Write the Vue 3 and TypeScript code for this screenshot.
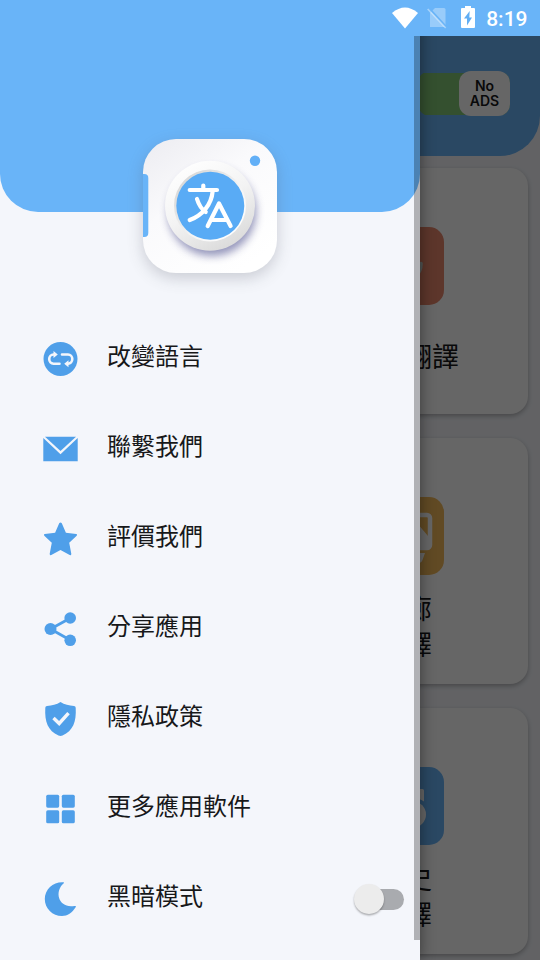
<script setup lang="ts">
import { ref } from 'vue'

type IconName = 'language' | 'mail' | 'star' | 'share' | 'privacy' | 'apps' | 'moon'

interface MenuItem {
  icon: IconName
  label: string
}

interface Feature {
  kind: 'voice' | 'gallery' | 'history'
  lines: string[]
}

const menu: MenuItem[] = [
  { icon: 'language', label: '改變語言' },
  { icon: 'mail', label: '聯繫我們' },
  { icon: 'star', label: '評價我們' },
  { icon: 'share', label: '分享應用' },
  { icon: 'privacy', label: '隱私政策' },
  { icon: 'apps', label: '更多應用軟件' },
  { icon: 'moon', label: '黑暗模式' },
]

const features: Feature[] = [
  { kind: 'voice', lines: ['語音翻譯'] },
  { kind: 'gallery', lines: ['畫廊', '翻譯'] },
  { kind: 'history', lines: ['歷史', '翻譯'] },
]

const darkMode = ref(false)
</script>

<template>
  <div class="screen">
    <main class="home">
      <header class="home-header">
        <div class="ads-switch">
          <div class="ads-thumb">
            <span>No</span>
            <span>ADS</span>
          </div>
        </div>
      </header>
      <section class="features">
        <article v-for="f in features" :key="f.kind" class="card">
          <div class="tile" :class="f.kind">
            <svg v-if="f.kind === 'voice'" viewBox="0 0 78 78">
              <path d="M31 20a8 8 0 0 1 16 0v16a8 8 0 0 1-16 0z" fill="#fff" />
              <path d="M22 36.5c0 22 33 22 33 0" fill="none" stroke="#c9d6d3" stroke-width="3.6" stroke-linecap="round" />
              <path d="M39 54v9" stroke="#fff" stroke-width="4" />
            </svg>
            <svg v-else-if="f.kind === 'gallery'" viewBox="0 0 78 78">
              <rect x="26" y="18" width="38" height="33" rx="3" fill="none" stroke="#fff" stroke-width="4.5" />
              <path d="M28 49V38l10-10 8 7 5-9 11 13v10z" fill="#fff" />
              <path d="M12 56h47l-2.5 7q-1 3-4 3H12z" fill="#fff" />
            </svg>
            <svg v-else viewBox="0 0 78 78">
              <path d="M17 22h39.5q1.500 0 1.500 1.500V34.500q-6-4-12-4T34 40L17 38z" fill="#fff" />
              <circle cx="47" cy="47.5" r="13" fill="#fff" />
              <path d="M44 40v9h5" fill="none" stroke="#69b4f8" stroke-width="3" />
            </svg>
          </div>
          <div class="caption">
            <p v-for="line in f.lines" :key="line">{{ line }}</p>
          </div>
        </article>
      </section>
    </main>

    <div class="scrim"></div>

    <aside class="drawer">
      <div class="drawer-header">
        <svg class="logo" viewBox="0 0 160 165">
          <defs>
            <linearGradient id="body" x1="0" y1="0" x2=".7" y2="1">
              <stop offset="0" stop-color="#ececf1" />
              <stop offset=".45" stop-color="#fafafc" />
              <stop offset="1" stop-color="#fff" />
            </linearGradient>
            <linearGradient id="ring" x1=".2" y1="0" x2=".75" y2="1">
              <stop offset="0" stop-color="#fff" />
              <stop offset=".5" stop-color="#f3f3f3" />
              <stop offset="1" stop-color="#d9d9d9" />
            </linearGradient>
            <linearGradient id="rim" x1=".1" y1=".1" x2=".9" y2=".9">
              <stop offset="0" stop-color="#d6d6d6" />
              <stop offset=".6" stop-color="#f4f4f4" />
              <stop offset="1" stop-color="#fff" />
            </linearGradient>
            <filter id="soft" x="-30%" y="-30%" width="160%" height="160%">
              <feGaussianBlur stdDeviation="8" />
            </filter>
            <filter id="lens" x="-30%" y="-30%" width="160%" height="160%">
              <feGaussianBlur stdDeviation="4" />
            </filter>
            <clipPath id="shell"><rect x="13" y="14" width="134" height="134" rx="33" /></clipPath>
          </defs>
          <rect x="13" y="19" width="134" height="134" rx="33" fill="#555968" opacity=".27" filter="url(#soft)" />
          <rect x="13" y="14" width="134" height="134" rx="33" fill="url(#body)" />
          <g clip-path="url(#shell)">
            <rect x="5" y="49" width="13.3" height="63" rx="4" fill="#69b4f8" />
          </g>
          <circle cx="125" cy="35.7" r="5.2" fill="#63b0f7" />
          <circle cx="82" cy="87" r="44" fill="#3d3f83" opacity=".55" filter="url(#lens)" />
          <circle cx="80" cy="80.7" r="45" fill="url(#ring)" />
          <circle cx="80" cy="80.5" r="36" fill="url(#rim)" />
          <circle cx="80.3" cy="80.7" r="34" fill="#59abf5" />
          <g fill="none" stroke="#fff" stroke-width="4.2" stroke-linecap="round" stroke-linejoin="round">
            <path d="M59.7 65H87M73.3 60.5V65M82.7 66C81.5 80 72 90.5 59.7 95M67 74C69 80.500 72 84.500 75.700 87" />
            <path d="M77.700 101 89 78.500 100.600 101M82 95H97" />
          </g>
        </svg>
      </div>

      <nav class="menu">
        <div v-for="item in menu" :key="item.icon" class="menu-item">
          <svg class="icon" viewBox="0.5 0 36 36">
            <template v-if="item.icon === 'language'">
              <circle cx="18" cy="18" r="17" fill="#4f9fe9" />
              <g fill="none" stroke="#f4f6fb" stroke-width="2.6" stroke-linecap="round" stroke-linejoin="round">
                <path d="M17 22.700H11a4.300 4.600 0 0 1 0-9.200h1" />
                <path d="M19.500 13.500h6a4.300 4.600 0 0 1 0 9.200H24.500" />
              </g>
              <path d="M11 10 15.300 13.500 11 17zM26 19.200 21.700 22.700 26 26.200z" fill="#f4f6fb" />
            </template>
            <template v-else-if="item.icon === 'mail'">
              <path d="M.8 7v23.200h34.400V7L18 23.200z" fill="#4f9fe9" />
              <path d="M2.500 5.700h31L18 20z" fill="#4f9fe9" />
            </template>
            <path
              v-else-if="item.icon === 'star'"
              d="m19.300 2.300 4.100 9.500 10.300 1.200q1.600.4.500 1.700l-7.500 7 2.100 11q.1 2-1.600 1.200L18 29l-9.200 4.900q-1.700.8-1.600-1.200l2.100-11-7.500-7q-1.100-1.300.5-1.700l10.300-1.200 4.100-9.500q1.300-1.700 2.600 0z"
              fill="#4f9fe9"
            />
            <g v-else-if="item.icon === 'share'" fill="#4f9fe9">
              <path d="M28 7 8 18l20 11.300" fill="none" stroke="#4f9fe9" stroke-width="2.8" />
              <circle cx="8" cy="18" r="6" />
              <circle cx="27.7" cy="7" r="5.8" />
              <circle cx="27.7" cy="29.3" r="5.8" />
            </g>
            <template v-else-if="item.icon === 'privacy'">
              <path
                d="M18 1c4 2.500 8.500 3.700 13.500 3.900q1.600.2 1.700 1.800C34 21 30.500 29.500 20 34.600q-2 .8-4 0C5.500 29.500 2 21 2.800 6.700q.1-1.600 1.700-1.800C9.500 4.700 14 3.500 18 1z"
                fill="#4f9fe9"
              />
              <path d="m11 17 5.700 5.500 9.300-10.300" fill="none" stroke="#f4f6fb" stroke-width="3.4" />
            </template>
            <g v-else-if="item.icon === 'apps'" fill="#4f9fe9">
              <rect x="3.7" y="3.7" width="13" height="13" rx="1.6" />
              <rect x="19.3" y="3.7" width="13" height="13" rx="1.6" />
              <rect x="3.7" y="19.3" width="13" height="13" rx="1.6" />
              <rect x="19.3" y="19.3" width="13" height="13" rx="1.6" />
            </g>
            <path
              v-else
              d="M21 1.200Q22.200 1.700 21 2.600C11 11.500 17 28 32 25q2-.4 1.300 1C29.500 32 25 35 19.500 35 10 35 2.300 27.500 2.300 18 2.300 8 11 .500 21 1.200z"
              fill="#4f9fe9"
            />
          </svg>
          <span class="label">{{ item.label }}</span>
          <button
            v-if="item.icon === 'moon'"
            class="switch"
            :class="{ on: darkMode }"
            type="button"
            @click="darkMode = !darkMode"
          >
            <span class="knob"></span>
          </button>
        </div>
      </nav>
      <div class="scrollbar"></div>
    </aside>

    <div class="status-bar">
      <svg class="wifi" viewBox="0 0 26 22">
        <path d="M0 6Q13-5 26 6L13 21.500z" fill="#fff" />
      </svg>
      <svg class="sim" viewBox="0 0 20 22">
        <path d="M8 1h9q1.500 0 1.500 1.500v17.500H3V6z" fill="#fff" opacity=".32" />
        <path d="M1.800.8 20 20.800" stroke="#69b4f8" stroke-width="2" />
        <path d="m.7 2 18 19" stroke="#fff" stroke-width="1.7" opacity=".4" />
      </svg>
      <svg class="battery" viewBox="0 0 14 22">
        <path d="M4 0h6v2h3q1 0 1 1v18q0 1-1 1H1q-1 0-1-1V3q0-1 1-1h3z" fill="#fff" />
        <path d="M8.700 5 3 12.500h3V19.500l5-8H8.300z" fill="#61aef4" />
      </svg>
      <span class="clock">8:19</span>
    </div>
  </div>
</template>

<style>
body {
  margin: 0;
}
</style>

<style scoped>
.screen {
  position: relative;
  width: 540px;
  height: 960px;
  overflow: hidden;
  background: #f4f6fb;
  font-family: Roboto, 'Noto Sans CJK TC', sans-serif;
  color: #17181a;
}
.home {
  height: 960px;
}
.home-header {
  box-sizing: border-box;
  height: 156px;
  padding: 71px 30px 0 0;
  display: flex;
  justify-content: flex-end;
  align-items: flex-start;
  background: #69b4f8;
  border-radius: 0 0 40px 40px;
}
.ads-switch {
  display: flex;
  justify-content: flex-end;
  width: 92px;
  height: 45px;
  border-radius: 12px;
  background: linear-gradient(#82c776, #82c776) center / 100% 42px no-repeat;
}
.ads-thumb {
  box-sizing: border-box;
  flex: none;
  display: flex;
  flex-direction: column;
  align-items: center;
  width: 51px;
  height: 45px;
  padding-top: 7px;
  border-radius: 12px;
  background: #fff;
  font: 600 14px/15px Inter, sans-serif;
}
.features {
  display: grid;
  grid-template-columns: 246px;
  justify-content: end;
  gap: 24px;
  padding: 12px 12px 0;
}
.card {
  box-sizing: border-box;
  height: 246px;
  padding-top: 59px;
  display: flex;
  flex-direction: column;
  align-items: center;
  border-radius: 18px;
  background: #fff;
  box-shadow: 0 2px 5px rgba(0, 0, 0, 0.28);
}
.tile {
  flex: none;
  width: 78px;
  height: 78px;
  border-radius: 15px;
  overflow: hidden;
}
.tile svg {
  display: block;
}
.voice {
  background: #e8876c;
}
.gallery {
  background: #f2b95a;
}
.history {
  background: #69b4f8;
}
.caption {
  flex: 1;
  display: flex;
  flex-direction: column;
  justify-content: center;
  padding-bottom: 4px;
  font-size: 27px;
  line-height: 36px;
}
.caption p {
  margin: 0;
}
.scrim {
  position: absolute;
  inset: 0;
  background: rgba(0, 0, 0, 0.6);
}
.drawer {
  position: absolute;
  left: 0;
  top: 0;
  width: 420px;
  height: 960px;
  background: #f4f6fb;
  box-shadow: 0 0 14px rgba(0, 0, 0, 0.45);
}
.drawer-header {
  box-sizing: border-box;
  height: 212px;
  padding-top: 125px;
  display: flex;
  justify-content: center;
  align-items: flex-start;
  background: #69b4f8;
  border-radius: 0 0 38px 38px;
}
.logo {
  flex: none;
  width: 160px;
  height: 165px;
  overflow: visible;
}
.menu {
  padding-top: 102px;
}
.menu-item {
  box-sizing: border-box;
  height: 90px;
  padding: 0 16px 0 43px;
  display: flex;
  align-items: center;
}
.icon {
  flex: none;
  width: 36px;
  height: 36px;
}
.label {
  margin-left: 28px;
  padding-bottom: 4px;
  font-size: 24px;
  line-height: 36px;
}
.switch {
  display: flex;
  align-items: center;
  width: 49px;
  height: 21px;
  margin: 0 0 0 auto;
  padding: 0;
  border: 0;
  border-radius: 11px;
  background: #a9abaf;
}
.knob {
  flex: none;
  width: 30px;
  height: 30px;
  margin-left: -1.5px;
  border-radius: 50%;
  background: #ececec;
  box-shadow: 0 1.5px 2px rgba(0, 0, 0, 0.3);
}
.switch.on {
  justify-content: flex-end;
  background: #9fcbf4;
}
.scrollbar {
  position: absolute;
  right: 0;
  top: 36px;
  width: 6px;
  height: 904px;
  background: rgba(0, 0, 0, 0.28);
}
.status-bar {
  position: absolute;
  left: 0;
  top: 0;
  box-sizing: border-box;
  width: 540px;
  height: 36px;
  padding: 0 12.5px 0 0;
  display: flex;
  justify-content: flex-end;
  align-items: center;
  background: #69b4f8;
}
.wifi {
  width: 26px;
  height: 22px;
  margin-right: 9px;
}
.sim {
  width: 20px;
  height: 22px;
  margin: 0 14px 0 0;
}
.battery {
  width: 14px;
  height: 22px;
  margin: -2px 11px 0 0;
}
.clock {
  padding-top: 1px;
  font-size: 21px;
  font-weight: 500;
  line-height: 36px;
  color: #fff;
}
</style>
